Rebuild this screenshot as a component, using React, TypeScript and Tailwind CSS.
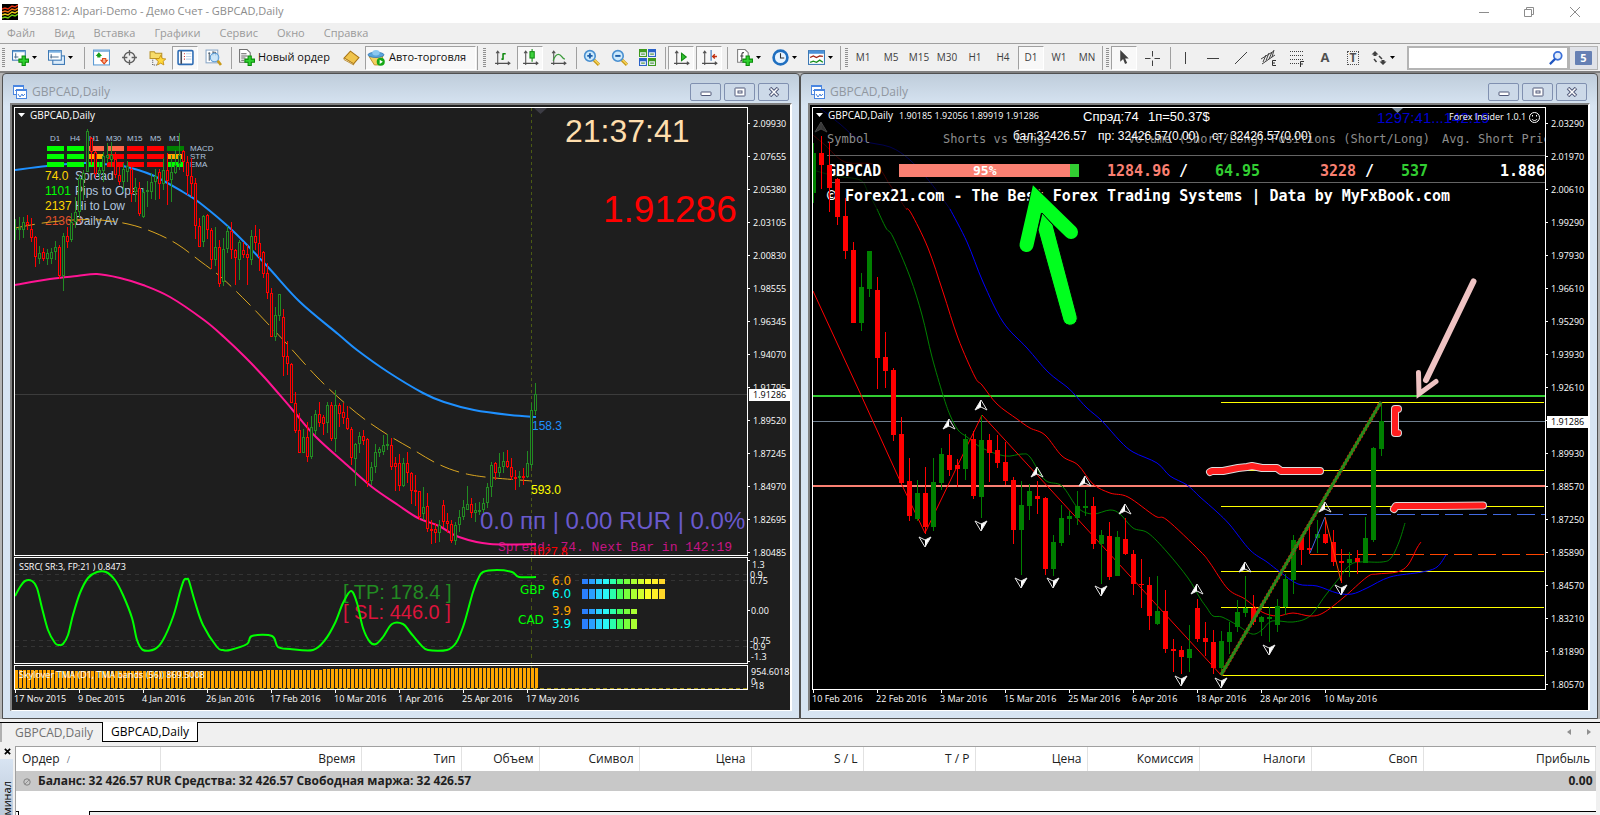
import type { ReactNode } from "react";

// high, low, body top, body bottom, 1 = up / 0 = down
type Candle = [number, number, number, number, number];

const LEFT_CANDLES: Candle[] = [
  [219, 240, 228, 230, 1], [217, 240, 228, 230, 1], [217, 238, 222, 230, 1], [215, 230, 222, 225, 0],
  [218, 242, 229, 238, 0], [236, 267, 237, 257, 0], [246, 264, 253, 259, 1], [248, 261, 252, 259, 0],
  [249, 265, 253, 259, 1], [248, 264, 252, 259, 1], [241, 260, 247, 252, 1], [245, 279, 247, 276, 0],
  [233, 291, 236, 276, 1], [227, 248, 236, 242, 0], [213, 242, 222, 240, 1], [197, 228, 212, 222, 1],
  [175, 218, 178, 212, 1], [170, 200, 173, 180, 1], [129, 172, 131, 172, 1], [137, 165, 138, 152, 0],
  [151, 178, 152, 174, 0], [162, 178, 170, 174, 1], [152, 182, 156, 171, 1], [143, 163, 155, 158, 1],
  [142, 167, 155, 160, 1], [152, 178, 159, 175, 0], [162, 185, 175, 182, 0], [163, 192, 169, 182, 1],
  [161, 182, 166, 172, 1], [167, 202, 169, 194, 0], [178, 202, 187, 192, 1], [182, 216, 188, 214, 0],
  [188, 218, 192, 217, 1], [181, 207, 190, 192, 1], [173, 199, 182, 192, 1], [169, 200, 176, 182, 1],
  [169, 199, 172, 184, 0], [158, 190, 170, 184, 1], [153, 205, 170, 181, 0], [155, 202, 172, 180, 1],
  [150, 174, 165, 173, 1], [133, 170, 155, 164, 1], [150, 172, 151, 162, 0], [156, 195, 162, 176, 0],
  [158, 197, 176, 184, 0], [178, 239, 183, 226, 0], [218, 247, 226, 247, 0], [215, 247, 216, 242, 1],
  [214, 239, 215, 230, 0], [228, 269, 230, 260, 0], [227, 266, 247, 260, 1], [240, 287, 247, 284, 0],
  [238, 286, 249, 282, 1], [226, 253, 231, 249, 1], [222, 259, 231, 250, 0], [249, 285, 250, 258, 0],
  [240, 280, 242, 260, 1], [242, 258, 250, 255, 0], [245, 285, 254, 258, 0], [230, 265, 236, 260, 1],
  [225, 250, 236, 243, 0], [229, 271, 243, 257, 0], [251, 278, 252, 274, 0], [263, 299, 273, 293, 0],
  [288, 337, 293, 337, 0], [307, 341, 315, 337, 1], [294, 321, 294, 316, 1], [309, 376, 317, 357, 0],
  [341, 375, 356, 364, 0], [363, 403, 364, 403, 0], [392, 433, 403, 431, 0], [413, 453, 430, 453, 0],
  [429, 453, 437, 453, 1], [422, 462, 437, 457, 0], [416, 459, 427, 457, 1], [410, 435, 414, 431, 1],
  [402, 427, 414, 423, 0], [415, 435, 417, 424, 0], [402, 433, 405, 423, 1], [402, 441, 405, 439, 0],
  [390, 452, 405, 439, 1], [403, 427, 405, 414, 0], [403, 424, 412, 418, 0], [406, 430, 418, 429, 0],
  [427, 465, 429, 458, 0], [443, 486, 444, 459, 1], [432, 453, 436, 444, 1], [430, 445, 436, 441, 0],
  [438, 487, 439, 482, 0], [462, 485, 467, 481, 1], [444, 473, 452, 467, 1], [447, 457, 449, 453, 1],
  [435, 455, 445, 452, 1], [434, 450, 444, 446, 1], [438, 470, 445, 467, 0], [457, 491, 463, 467, 0],
  [454, 491, 463, 486, 0], [458, 487, 463, 486, 1], [452, 483, 463, 473, 0], [472, 504, 473, 491, 0],
  [475, 506, 490, 492, 0], [491, 520, 491, 517, 0], [487, 520, 507, 514, 1], [493, 532, 506, 529, 0],
  [520, 544, 529, 530, 0], [523, 543, 529, 533, 0], [520, 542, 525, 533, 1], [500, 527, 505, 522, 0],
  [513, 533, 521, 524, 0], [520, 543, 524, 541, 0], [522, 545, 525, 541, 1], [510, 532, 517, 525, 1],
  [500, 520, 507, 517, 1], [486, 510, 504, 510, 1], [498, 518, 504, 513, 0], [503, 522, 510, 513, 1],
  [502, 515, 510, 511, 1], [498, 513, 503, 510, 1], [483, 508, 487, 503, 1], [462, 497, 465, 487, 1],
  [462, 480, 463, 473, 0], [453, 477, 467, 473, 1], [452, 473, 461, 467, 1], [450, 468, 461, 467, 0],
  [458, 480, 467, 477, 0], [470, 490, 477, 479, 0], [471, 487, 476, 478, 1], [468, 485, 476, 478, 0],
  [451, 478, 463, 477, 1], [403, 468, 410, 465, 1], [383, 415, 394, 411, 1],
];

const RIGHT_CANDLES: Candle[] = [
  [143, 203, 153, 193, 1], [136, 189, 153, 165, 0], [142, 212, 165, 188, 0], [178, 225, 179, 217, 0],
  [198, 259, 216, 251, 0], [242, 323, 250, 323, 0], [273, 331, 287, 323, 1], [251, 297, 251, 289, 1],
  [277, 389, 290, 358, 0], [332, 388, 357, 371, 0], [368, 441, 370, 435, 0], [417, 484, 434, 483, 0],
  [458, 521, 481, 516, 0], [480, 521, 493, 519, 1], [467, 534, 493, 527, 0], [458, 531, 482, 527, 1],
  [448, 490, 454, 483, 1], [434, 476, 455, 470, 0], [459, 487, 465, 469, 0], [434, 480, 439, 469, 1],
  [431, 499, 439, 496, 0], [415, 518, 440, 497, 1], [434, 482, 440, 453, 0], [435, 468, 450, 463, 0],
  [442, 485, 462, 481, 0], [477, 544, 480, 530, 0], [481, 575, 505, 530, 1], [484, 520, 491, 506, 1],
  [481, 514, 496, 499, 0], [497, 575, 498, 569, 0], [535, 576, 542, 569, 1], [505, 546, 518, 543, 1],
  [511, 535, 516, 519, 1], [491, 525, 506, 518, 1], [490, 516, 506, 508, 1], [497, 549, 506, 544, 0],
  [530, 584, 535, 544, 1], [522, 580, 536, 577, 0], [531, 576, 537, 576, 1], [518, 555, 539, 554, 0],
  [550, 595, 554, 584, 0], [559, 608, 584, 585, 0], [577, 630, 585, 616, 0], [576, 625, 611, 624, 1],
  [590, 653, 611, 649, 0], [639, 672, 649, 651, 0], [646, 674, 650, 657, 0], [625, 672, 649, 658, 1],
  [599, 642, 608, 639, 0], [622, 656, 638, 642, 0], [630, 674, 642, 668, 0], [631, 676, 641, 668, 1],
  [622, 654, 632, 642, 1], [600, 632, 612, 627, 1], [576, 617, 608, 613, 1], [595, 625, 608, 622, 0],
  [616, 636, 617, 622, 1], [607, 642, 617, 619, 1], [599, 632, 606, 625, 1], [574, 615, 579, 607, 1],
  [535, 594, 540, 580, 1], [537, 565, 538, 550, 0], [525, 554, 548, 550, 0], [520, 553, 534, 538, 1],
  [520, 544, 534, 543, 0], [530, 566, 542, 562, 0], [549, 583, 561, 563, 0], [552, 577, 559, 563, 1],
  [550, 574, 558, 562, 0], [517, 563, 538, 563, 1], [447, 542, 448, 540, 1], [402, 456, 421, 449, 1],
];

const LEFT_PRICES = [
  "2.09930", "2.07655", "2.05380", "2.03105", "2.00830", "1.98555", "1.96345",
  "1.94070", "1.91795", "1.89520", "1.87245", "1.84970", "1.82695", "1.80485",
];
const RIGHT_PRICES = [
  "2.03290", "2.01970", "2.00610", "1.99290", "1.97930", "1.96610", "1.95290", "1.93930", "1.92610",
  "", "1.89930", "1.88570", "1.87250", "1.85890", "1.84570", "1.83210", "1.81890", "1.80570",
];
const LEFT_DATES = [
  "17 Nov 2015", "9 Dec 2015", "4 Jan 2016", "26 Jan 2016", "17 Feb 2016",
  "10 Mar 2016", "1 Apr 2016", "25 Apr 2016", "17 May 2016",
];
const RIGHT_DATES = [
  "10 Feb 2016", "22 Feb 2016", "3 Mar 2016", "15 Mar 2016", "25 Mar 2016",
  "6 Apr 2016", "18 Apr 2016", "28 Apr 2016", "10 May 2016",
];

const SIGNALS = [
  { y: 146, label: "MACD", colors: ["#00ff00", "#00ff00", "#ff6347", "#ff6347", "#ff0000", "#ff0000", "#008000"] },
  { y: 154, label: "STR", colors: ["#00ff00", "#00ff00", "#ffa500", "#ff0000", "#ff0000", "#ff0000", "#ffa500"] },
  { y: 162, label: "EMA", colors: ["#00ff00", "#00ff00", "#00ff00", "#ff0000", "#ff0000", "#ff0000", "#00ff00"] },
];

const STRENGTH = [
  "#2a7fff", "#2a9fff", "#2ad4ff", "#2af7f7", "#2affaa", "#46ff5a",
  "#78ff3c", "#aaff32", "#d2ff2d", "#faff28", "#ffee28", "#ffd728",
];

const UP_FRACTALS = [[949, 424], [981, 405], [1037, 472], [1085, 481], [1125, 509], [1197, 589], [1245, 567], [1325, 507]];
const DOWN_FRACTALS = [
  [925, 542], [981, 526], [1021, 583], [1053, 583], [1101, 591], [1181, 681], [1221, 683], [1269, 650], [1341, 590],
];

const TIMEFRAMES = ["M1", "M5", "M15", "M30", "H1", "H4", "D1", "W1", "MN"];
const MENU = ["Файл", "Вид", "Вставка", "Графики", "Сервис", "Окно", "Справка"];

function barTop(i: number) {
  if (i < 10) return 670;
  if (i < 62) return 671;
  if (i < 77) return 670;
  if (i < 94) return 669;
  return 668;
}

/* ---------- toolbar ---------- */

function Sep() {
  return <div className="h-[22px] w-[5px] shrink-0 border-r border-[#a0a0a0]" />;
}

function Grip() {
  return (
    <div className="mx-px flex h-5 w-[3px] shrink-0 flex-col justify-between">
      {Array.from({ length: 10 }).map((_, i) => (
        <div key={i} className="h-px bg-[#909090]" />
      ))}
    </div>
  );
}

function ToolButton({ label, pressed, children }: { label: string; pressed?: boolean; children: ReactNode }) {
  return (
    <button
      aria-label={label}
      className={
        pressed
          ? "mx-px flex h-6 w-[26px] shrink-0 items-center justify-center border border-[#a0a0a0] border-r-white border-b-white bg-[#f8f8f8]"
          : "flex h-6 w-7 shrink-0 items-center justify-center"
      }
    >
      {children}
    </button>
  );
}

function DropButton({ label, children }: { label: string; children: ReactNode }) {
  return (
    <button aria-label={label} className="flex h-6 w-9 shrink-0 items-center gap-[3px] pl-1">
      {children}
      <svg className="h-[3px] w-[5px]" viewBox="0 0 5 3">
        <path d="M0 0h5L2.5 3z" />
      </svg>
    </button>
  );
}

function Icon({ children, className = "size-[17px]" }: { children: ReactNode; className?: string }) {
  return (
    <svg viewBox="0 0 16 16" className={`shrink-0 overflow-visible ${className}`} fill="none">
      {children}
    </svg>
  );
}

function Plus() {
  return <path d="M9.5 6.500h3v3h3v3h-3v3h-3v-3h-3v-3h3z" fill="#2fd12f" stroke="#0a8a0a" />;
}

function Axes() {
  return <path d="M3.500 2v13M1 13.500h14M2 4l1.500-2L5 4M13 12l2 1.500-2 1.500" stroke="#505050" />;
}

function Magnifier({ plus }: { plus?: boolean }) {
  return (
    <>
      <path d="M10 10l5 5" stroke="#c99a1a" strokeWidth="3" />
      <path d="M10.500 10l4.500 4.500" stroke="#ffe066" />
      <circle cx="6.500" cy="6.500" r="5" fill="#cdeafc" stroke="#4a90d0" strokeWidth="1.500" />
      <path d={plus ? "M4 6.500h5M6.500 4v5" : "M4 6.500h5"} stroke="#1f5fa8" strokeWidth="1.800" />
    </>
  );
}

function Toolbar() {
  return (
    <div className="flex h-[27px] items-center overflow-hidden bg-[#f0f0f0] pl-px">
      <Grip />
      <div className="w-0.5 shrink-0" />
      <DropButton label="Новый график">
        <Icon>
          <rect x="0.500" y="1.500" width="12" height="9" fill="#fff" stroke="#3c78b4" />
          <path d="M1 2.500h11" stroke="#5b9bd5" />
          <path d="M3.500 4v5M2 7.500h4" stroke="#507090" />
          <Plus />
        </Icon>
      </DropButton>
      <DropButton label="Профили">
        <Icon>
          <rect x="4.500" y="6.500" width="11" height="8" fill="#dcecfa" stroke="#3c78b4" />
          <rect x="0.500" y="1.500" width="12" height="9" fill="#fff" stroke="#3c78b4" />
          <path d="M1 2.500h11" stroke="#7ab0e0" strokeWidth="2" />
          <path d="M3 5v4M2 7.500h8" stroke="#507090" />
        </Icon>
      </DropButton>
      <Sep />
      <div className="w-0.5 shrink-0" />
      <ToolButton label="Обзор рынка">
        <Icon>
          <rect x="0.500" y="1" width="15" height="14" fill="#fff" stroke="#5b9bd5" />
          <path d="M1 2h14" stroke="#5b9bd5" />
          <path d="M5.500 3l3 3.500H7V8H4V6.500H2.500z" fill="#18a018" />
          <path d="M10.500 14l-3-3.500H9V9h3v1.500h1.500z" fill="#f8b090" stroke="#e04818" />
        </Icon>
      </ToolButton>
      <ToolButton label="Окно данных">
        <Icon>
          <circle cx="8" cy="8" r="5" stroke="#606060" strokeWidth="1.300" />
          <path d="M8 1v5M8 10v5M1 8h5M10 8h5" stroke="#606060" strokeWidth="1.200" />
        </Icon>
      </ToolButton>
      <ToolButton label="Навигатор">
        <Icon>
          <path d="M1 9V2.500h4l1 1.500h6v5z" fill="#f7dc6a" stroke="#b8922a" />
          <path d="M3.500 10v5h4" stroke="#505050" strokeDasharray="1 1" />
          <path d="M11 6l1.500 3 3.300.4-2.500 2.200.7 3.400-3-1.700L8 15l.7-3.400-2.500-2.200 3.300-.4z" fill="#ffd83a" stroke="#c08a10" strokeWidth="0.800" />
        </Icon>
      </ToolButton>
      <ToolButton label="Терминал" pressed>
        <Icon>
          <rect x="1" y="1.500" width="14" height="13" rx="1" fill="#fff" stroke="#2f6db5" strokeWidth="1.500" />
          <path d="M4 2v12" stroke="#404858" strokeWidth="1.500" />
          <path d="M6.500 4.500h1M6.500 7h1M6.500 9.500h1" stroke="#d03030" />
          <path d="M8.500 4.500h5M8.500 7h5M8.500 9.500h5" stroke="#c4d6ec" />
        </Icon>
      </ToolButton>
      <ToolButton label="Тестер стратегий">
        <Icon>
          <rect x="1" y="1" width="11" height="12" fill="#fff" stroke="#8aa8c8" />
          <path d="M4 3v8M3 4h2M7.500 2v4M10 3v3M7 3h3" stroke="#506070" />
          <circle cx="9" cy="8" r="4" fill="#bfe0f8" fillOpacity="0.800" stroke="#5b9bd5" />
          <path d="M12 11l3 4" stroke="#c99a1a" strokeWidth="2.500" />
        </Icon>
      </ToolButton>
      <Sep />
      <button className="flex h-6 shrink-0 items-center gap-[3px] pr-[5px] pl-[6px]">
        <Icon>
          <path d="M1.500 0.500h7l3 3v9h-10z" fill="#fff" stroke="#707070" />
          <path d="M3 4.500h5M3 6.500h6M3 8.500h4M3 10.500h3" stroke="#606060" />
          <Plus />
        </Icon>
        <span className="w-[74px] text-left text-[11px] whitespace-nowrap text-[#101010]">Новый ордер</span>
      </button>
      <ToolButton label="MetaEditor">
        <Icon>
          <path d="M1 8.500l6-6.500 8 6-5 6z" fill="#f0c44c" stroke="#a87414" />
          <path d="M1 8.500l9 5.500v1L1 10z" fill="#fff4c8" stroke="#a87414" strokeWidth="0.700" />
        </Icon>
      </ToolButton>
      <button className="flex h-6 w-[111px] shrink-0 items-center gap-1 border border-[#a0a0a0] border-r-white border-b-white bg-[#f8f8f8] pl-0.5">
        <Icon>
          <path d="M1 7l5 8h5l3-8z" fill="#f4d060" stroke="#b48a20" strokeWidth="0.800" />
          <ellipse cx="7.500" cy="5.500" rx="7.500" ry="2.500" fill="#5aa5dc" stroke="#2a70b0" strokeWidth="0.700" />
          <ellipse cx="7.500" cy="3.500" rx="3.500" ry="2.500" fill="#8cc8f0" />
          <circle cx="12" cy="12" r="3.800" fill="#16a816" />
          <path d="M11 10l3 2-3 2z" fill="#fff" />
        </Icon>
        <span className="text-[11px] whitespace-nowrap text-[#101010]">Авто-торговля</span>
      </button>
      <div className="h-6 w-0.5 shrink-0 border-r border-[#a0a0a0]" />
      <div className="w-1 shrink-0" />
      <Grip />
      <div className="w-px shrink-0" />
      <ToolButton label="Бары">
        <Icon><Axes /><path d="M8.500 10V4M8.500 9.500H7M8.500 4.500H11" stroke="#128a12" strokeWidth="1.500" /></Icon>
      </ToolButton>
      <ToolButton label="Свечи" pressed>
        <Icon><Axes /><path d="M9.500 0v12" stroke="#128a12" /><rect x="7.500" y="2.500" width="4" height="6" fill="#3cd23c" stroke="#128a12" /></Icon>
      </ToolButton>
      <ToolButton label="Линия">
        <Icon><Axes /><path d="M3 11c1-3 3-6 5-6 3 0 3 4 6 4.500" stroke="#3a9a3a" strokeWidth="1.200" /></Icon>
      </ToolButton>
      <Sep />
      <ToolButton label="Увеличить"><Icon><Magnifier plus /></Icon></ToolButton>
      <ToolButton label="Уменьшить"><Icon><Magnifier /></Icon></ToolButton>
      <ToolButton label="Окна мозаикой">
        <Icon>
          <path d="M0 0h7.500v7.500H0zM8.500 8.500H16V16H8.500z" fill="#3f9a1e" />
          <path d="M8.500 0H16v7.500H8.500zM0 8.500h7.500V16H0z" fill="#2a62c8" />
          <path d="M1 3h5.500v3.500H1zM9.500 3H15v3.500H9.500zM1 11.500h5.500V15H1zM9.500 11.500H15V15H9.500z" fill="#e8f0f8" />
          <path d="M2 4.800h3.500M10.500 4.800H14M2 13.300h3.500M10.500 13.300H14" stroke="#5a9a4a" />
        </Icon>
      </ToolButton>
      <Sep />
      <div className="w-px shrink-0" />
      <ToolButton label="Автопрокрутка" pressed>
        <Icon><Axes /><path d="M8 4l4.500 3.500L8 11z" fill="#2cc02c" stroke="#128a12" /></Icon>
      </ToolButton>
      <ToolButton label="Сдвиг графика" pressed>
        <Icon><Axes /><path d="M9.500 1v10" stroke="#2f6db5" /><path d="M15 7h-4M13 5l-2 2 2 2" stroke="#c03010" strokeWidth="1.300" /></Icon>
      </ToolButton>
      <Sep />
      <div className="w-1 shrink-0" />
      <DropButton label="Индикаторы">
        <Icon>
          <path d="M1.500 0.500h7l3 3v9h-10z" fill="#fff" stroke="#808080" />
          <path d="M7.500 3.500c-2-.5-2 1-2 2.500v4c0 1-.5 1.500-1.500 1M4 6.500h3" stroke="#404040" />
          <Plus />
        </Icon>
      </DropButton>
      <DropButton label="Периоды">
        <Icon>
          <circle cx="8" cy="8" r="6.500" fill="#e8f4ff" stroke="#1f6fc0" strokeWidth="2.500" />
          <path d="M8 4v4.500h3.500" stroke="#303030" />
        </Icon>
      </DropButton>
      <DropButton label="Шаблоны">
        <Icon>
          <rect x="0.500" y="1.500" width="15" height="13" fill="#fff" stroke="#3c78b4" />
          <path d="M1 3h14" stroke="#4a90d8" strokeWidth="3" />
          <path d="M2 8l3-1.500 3 1.500 3-1.500 3 .5" stroke="#a02010" strokeWidth="1.300" />
          <path d="M2 12.500l3-1 3 1 3-2 3 2" stroke="#18901c" strokeWidth="1.300" />
        </Icon>
      </DropButton>
      <div className="h-6 w-px shrink-0 bg-[#a0a0a0]" />
      <div className="w-[3px] shrink-0" />
      <Grip />
      {TIMEFRAMES.map((tf) => (
        <ToolButton key={tf} label={tf} pressed={tf === "D1"}>
          <span className="text-[10px] text-[#404040]">{tf}</span>
        </ToolButton>
      ))}
      <div className="h-6 w-0.5 shrink-0 border-r border-[#a0a0a0]" />
      <div className="w-0.5 shrink-0" />
      <Grip />
      <ToolButton label="Курсор" pressed>
        <Icon><path d="M4 1v11l2.700-2.500L8.500 14l2-.8-1.900-4.200H12z" fill="#404040" /></Icon>
      </ToolButton>
      <ToolButton label="Перекрестие">
        <Icon className="size-4"><path d="M8.500 1v5.500M8.500 10.500V16M1 8.500h5.500M10.500 8.500H16" stroke="#404040" /></Icon>
      </ToolButton>
      <Sep />
      <ToolButton label="Вертикальная линия"><Icon className="size-4"><path d="M8.500 2v12" stroke="#404040" /></Icon></ToolButton>
      <ToolButton label="Горизонтальная линия"><Icon className="size-4"><path d="M2 8.500h12" stroke="#404040" /></Icon></ToolButton>
      <ToolButton label="Трендовая линия"><Icon className="size-4"><path d="M2 14L14 2" stroke="#404040" /></Icon></ToolButton>
      <ToolButton label="Канал">
        <Icon className="size-4">
          <path d="M0 9L13 1M1 14L14 5M2 12l3-7M5 10.500L8 3M8 9l3-7M11 7l2-7" stroke="#404040" />
          <path d="M15 10.500h-3.500v5H15M11.500 13H14" stroke="#303030" />
        </Icon>
      </ToolButton>
      <ToolButton label="Фибоначчи">
        <Icon className="size-4">
          <path d="M1 1.500h14M1 5.500h14M1 9.500h14M1 13.500h9" stroke="#404040" strokeDasharray="1 1" />
          <path d="M15 11.500h-3.500V17M11.500 14H14" stroke="#303030" />
        </Icon>
      </ToolButton>
      <ToolButton label="Текст"><span className="text-[13px] font-bold text-[#505050]">A</span></ToolButton>
      <ToolButton label="Метка">
        <span className="flex h-[14px] w-3 items-center justify-center border border-dotted border-[#505050] text-[12px] font-bold text-[#505050]">
          T
        </span>
      </ToolButton>
      <DropButton label="Стрелки">
        <Icon className="size-4">
          <path d="M4 1l3.500 3.500H5.500v1.500h-3V4.500H.5zM12 15l-3.500-3.500h2V10h3v1.500h2z" fill="#404040" />
          <path d="M3 9l2.500 3M8 6l3 3" stroke="#404040" strokeWidth="1.500" />
        </Icon>
      </DropButton>
      <div className="ml-1 flex h-6 min-w-0 flex-1 items-center border-2 border-[#b4b4b4] bg-white">
        <input type="text" aria-label="Поиск" className="min-w-0 flex-1 bg-transparent px-1 text-[11px] outline-none" />
        <Icon className="mr-1 size-[14px]">
          <circle cx="10" cy="5.500" r="4.500" stroke="#3a6fd8" strokeWidth="2" fill="#e4eefc" />
          <path d="M7 9l-6 6" stroke="#1f55c0" strokeWidth="2.500" />
        </Icon>
      </div>
      <button className="mr-0.5 flex h-6 w-[29px] shrink-0 items-center justify-center border border-[#b4b4b4] bg-[#e0e2e8]">
        <span className="rounded-[1px] bg-[#6680b4] px-[5px] text-[11px] leading-[14px] font-bold text-white">5</span>
      </button>
    </div>
  );
}

/* ---------- chart pieces ---------- */

function Candles({ data, x0, step, hollow }: { data: Candle[]; x0: number; step: number; hollow?: boolean }) {
  return (
    <g shapeRendering="crispEdges">
      {data.map(([h, l, t, b, up], i) => {
        const x = x0 + i * step;
        const color = hollow ? (up ? "#228b22" : "#ff0000") : up ? "#008000" : "#ff0000";
        return (
          <g key={i}>
            <rect x={x} y={h} width={1} height={l - h} fill={color} />
            {hollow ? (
              <rect x={x - 0.5} y={t + 0.5} width={2} height={Math.max(1, b - t - 1)} fill="#1e1e1e" stroke={color} />
            ) : (
              <rect x={x - 2} y={t} width={5} height={Math.max(1, b - t)} fill={color} />
            )}
          </g>
        );
      })}
    </g>
  );
}

type LineProps = { points: string; color: string; width?: number; dash?: string };

function Line({ points, color, width = 1, dash }: LineProps) {
  return <polyline points={points} fill="none" stroke={color} strokeWidth={width} strokeDasharray={dash} />;
}

// Same as Line, but runs a Catmull-Rom spline through the points
function Curve({ points, color, width = 1, dash }: LineProps) {
  const p = points.split(" ").map((s) => s.split(",").map(Number));
  let d = `M${p[0][0]} ${p[0][1]}`;
  for (let i = 0; i < p.length - 1; i++) {
    const a = p[i - 1] ?? p[i];
    const b = p[i];
    const c = p[i + 1];
    const e = p[i + 2] ?? c;
    d += `C${b[0] + (c[0] - a[0]) / 6} ${b[1] + (c[1] - a[1]) / 6} ${c[0] - (e[0] - b[0]) / 6} ${c[1] - (e[1] - b[1]) / 6} ${c[0]} ${c[1]}`;
  }
  return <path d={d} fill="none" stroke={color} strokeWidth={width} strokeDasharray={dash} />;
}

function PriceScale({ prices, current }: { prices: string[]; current: ReactNode }) {
  return (
    <div className="relative h-0 w-[42px] shrink-0">
      {prices.map((p, i) => (
        <div key={i} className="flex h-[33px] items-center gap-[3px] text-[9px] text-white">
          <span className="h-px w-0.5 bg-white" />
          {p}
        </div>
      ))}
      {current}
    </div>
  );
}

function TimeScale({ dates }: { dates: string[] }) {
  return (
    <div className="flex h-5 overflow-hidden pl-px text-[9px] leading-[14px] whitespace-nowrap text-white">
      {dates.map((d) => (
        <div key={d} className="relative w-16 shrink-0">
          <span className="absolute top-0 left-0 h-[3px] w-px bg-white" />
          <span className="-ml-px block pt-0.5">{d}</span>
        </div>
      ))}
    </div>
  );
}

function WindowButton({ label, children }: { label: string; children: ReactNode }) {
  return (
    <button
      aria-label={label}
      className="flex h-[18px] w-[31px] items-center justify-center rounded-[2px] border border-[#8090b0] bg-[#ccd9e8]"
    >
      <svg viewBox="0 0 12 10" className="h-[10px] w-3" fill="none">
        {children}
      </svg>
    </button>
  );
}

function ChartWindow({ title, dark, children }: { title: string; dark: string; children: ReactNode }) {
  return (
    <section className="min-w-0 flex-1 rounded-t-[4px] border border-[#505050] bg-gradient-to-b from-[#bfcddb] from-0% to-[#d7e4f2] to-5% px-[7px] pb-[7px]">
      <header className="flex h-[29px] items-center pt-1.5">
        <svg viewBox="0 0 14 14" className="ml-[3px] size-[14px]" fill="none">
          <rect x="0.500" y="0.500" width="10" height="9" fill="#fff" stroke="#4a86e0" />
          <path d="M1 1.500h9" stroke="#4a86e0" />
          <path d="M2 6l2-2 2 3 2-3" stroke="#4a86e0" />
          <rect x="3.500" y="4.500" width="10" height="9" fill="#fff" stroke="#4a86e0" />
          <path d="M4 5.500h9M5 9l2 3 2-3 1 2 2-2" stroke="#4a86e0" />
        </svg>
        <h2 className="ml-[5px] flex-1 text-[12px] text-[#9097a0]">{title}</h2>
        <div className="mr-[3px] flex gap-[3px]">
          <WindowButton label="Свернуть">
            <rect x="1" y="5" width="10" height="3.500" rx="0.500" fill="#fff" stroke="#505878" />
          </WindowButton>
          <WindowButton label="Развернуть">
            <rect x="1" y="1" width="10" height="8" rx="0.500" fill="#fff" stroke="#505878" />
            <rect x="4" y="4" width="4" height="2" fill="#fff" stroke="#505878" />
          </WindowButton>
          <WindowButton label="Закрыть">
            <path d="M2 1l8 8M10 1L2 9" stroke="#505878" strokeWidth="3.500" />
            <path d="M2.500 1.500l7 7M9.500 1.500l-7 7" stroke="#fff" strokeWidth="1.500" />
          </WindowButton>
        </div>
      </header>
      <div className={`border-t-2 border-r-2 border-b border-l-2 border-[#808080] border-r-white border-b-white pt-0.5 pl-0.5 ${dark}`}>
        {children}
      </div>
    </section>
  );
}

function LeftChart() {
  return (
    <ChartWindow title="GBPCAD,Daily" dark="bg-[#1e1e1e]">
      <div className="flex">
        <div className="min-w-0 flex-1 border border-white">
          <svg className="block h-[447px] w-full overflow-hidden">
            <g transform="translate(-15,-108)">
              <g shapeRendering="crispEdges">
                <line x1="531.500" x2="531.500" y1="108" y2="556" stroke="#4b5a14" strokeDasharray="3 3" />
                <line x1="15" x2="2400" y1="394.500" y2="394.500" stroke="#3c3c3c" />
              </g>
              <path d="M534 108h13l-6.500 6z" fill="#3c3c44" />
              <path d="M18 113h7l-3.500 4z" fill="#fff" />
              <text x="30" y="119" className="fill-white text-[10px]">GBPCAD,Daily</text>

              <Curve color="#1e90ff" width={2} points="15,170 47,166 83,163 103,164 123,166 152,175 183,192 200,203 233,231 267,266 300,302 338,334 357,350 388,372 423,393 444,402 474,410 510,415 536,417" />
              <g className="font-['Liberation_Sans'] text-[8px]" fill="#b0c4de">
                {["D1", "H4", "H1", "M30", "M15", "M5", "M1"].map((t, i) => (
                  <text key={t} x={[50, 70, 89, 106, 127, 150, 169][i]} y="141">{t}</text>
                ))}
                {SIGNALS.map((row) => (
                  <text key={row.label} x="190" y={row.y + 5}>{row.label}</text>
                ))}
              </g>
              {SIGNALS.map((row) =>
                row.colors.map((c, i) => <rect key={row.label + i} x={47 + i * 20} y={row.y} width="17" height="5" fill={c} />)
              )}
              <g className="font-['Liberation_Sans'] text-[12px]">
                <text x="45" y="180" fill="#ffd700">74.0</text>
                <text x="75" y="180" fill="#b0c4de">Spread</text>
                <text x="45" y="195" fill="#00ff00">1101</text>
                <text x="75" y="195" fill="#b0c4de">Pips to Open</text>
                <text x="45" y="210" fill="#ffd700">2137</text>
                <text x="75" y="210" fill="#b0c4de">Hi to Low</text>
                <text x="45" y="225" fill="#e2502a">2136.3</text>
                <text x="75" y="225" fill="#b0c4de">Daily Av</text>
              </g>
              <text x="565" y="142" className="font-['Liberation_Sans'] text-[32px]" fill="#ffdead">21:37:41</text>
              <text x="603" y="222" className="font-['Liberation_Sans'] text-[37px]" fill="#ff0000">1.91286</text>
              <text x="480" y="529" className="font-['Liberation_Sans'] text-[24px]" fill="#6a5acd">0.0 пп | 0.00 RUR | 0.0%</text>
              <text x="498" y="551" className="font-['Liberation_Mono'] text-[13px]" fill="#c71585">Spread: 74. Next Bar in 142:19</text>
              <text x="532" y="430" className="font-['Liberation_Sans'] text-[12px]" fill="#1e90ff">158.3</text>
              <text x="531" y="494" className="font-['Liberation_Sans'] text-[12px]" fill="#ffff00">593.0</text>
              <text x="531" y="556" className="font-['Liberation_Sans'] text-[12px]" fill="#ff0000">1027.8</text>

              <Curve color="#daa520" dash="20 7" points="15,228 43,223 73,220 100,220 128,224 153,232 177,244 200,261 222,278 248,303 270,326 286,343 316,376 339,398 363,418 388,435 412,449 436,463 459,472 485,477 532,481" />
              <Curve color="#ff1493" width={2} points="15,285 50,279 77,276 97,274 120,278 143,285 170,297 204,320 224,337 245,357 265,378 291,408 316,437 347,465 372,487 398,505 418,518 439,526 459,537 490,544 536,544" />
              <Candles data={LEFT_CANDLES} x0={15} step={4} hollow />
            </g>
          </svg>
        </div>
        <PriceScale
          prices={LEFT_PRICES}
          current={
            <div className="absolute top-[282px] right-0 left-px h-3 bg-white pl-1 text-[9px] leading-3 text-black">1.91286</div>
          }
        />
      </div>

      <div className="mt-px flex">
        <div className="min-w-0 flex-1 border border-white">
          <svg className="block h-[105px] w-full overflow-hidden">
            <g transform="translate(-15,-558)">
              <g stroke="#343434" strokeDasharray="4 4" shapeRendering="crispEdges">
                {[574.5, 580.5, 640.5, 646.5].map((y) => (
                  <line key={y} x1="15" x2="2400" y1={y} y2={y} />
                ))}
                <line x1="531.500" x2="531.500" y1="558" y2="664" stroke="#4b5a14" />
              </g>
              <text x="19" y="570" className="fill-white text-[9px]">SSRC( SR:3,  FP:21 ) 0.8473</text>
              <g className="font-['Liberation_Sans'] text-[20px]">
                <text x="343" y="599" fill="#228b22">[ TP: 178.4 ]</text>
                <text x="343" y="619" fill="#dc143c">[ SL: 446.0 ]</text>
              </g>
              <Curve color="#00ff00" width={2} points="15,596 20,587 25,581 32,581 37,588 42,608 48,630 55,643 59,645 63,644 68,635 73,615 80,593 88,578 97,572 106,572 115,580 123,595 132,618 137,640 143,650 155,649 163,640 173,617 180,592 184,580 187,579 189,581 195,602 203,625 217,647 223,650 230,650 247,644 252,636 272,636 278,647 290,649 313,650 325,640 335,623 343,603 351,591 357,603 363,628 370,642 376,644 383,637 392,624 403,624 410,632 420,644 428,650 447,650 456,643 463,627 468,610 473,592 478,579 483,572 497,570 512,572 519,577 536,577" />
              <g className="font-['DejaVu_Sans'] text-[12px]">
                <text x="520" y="594" fill="#00ff00">GBP</text>
                <text x="518" y="624" fill="#00ff00">CAD</text>
                <text x="552" y="585" fill="#ffa500">6.0</text>
                <text x="552" y="598" fill="#00ffff">6.0</text>
                <text x="552" y="615" fill="#ffa500">3.9</text>
                <text x="552" y="628" fill="#00ffff">3.9</text>
              </g>
              {STRENGTH.map((c, i) => (
                <g key={c} fill={c}>
                  <rect x={582 + i * 7} y="579" width="6" height="5" />
                  <rect x={582 + i * 7} y="589" width="6" height="10" />
                  {i < 8 && <rect x={582 + i * 7} y="609" width="6" height="5" />}
                  {i < 8 && <rect x={582 + i * 7} y="619" width="6" height="10" />}
                </g>
              ))}
            </g>
          </svg>
        </div>
        <svg className="block h-[107px] w-[42px] shrink-0 overflow-visible">
          <g className="fill-white text-[9px]">
            <text x="4" y="11">1.3</text>
            <text x="2" y="21">0.9</text>
            <text x="2" y="27">0.75</text>
            <text x="3" y="57">0.00</text>
            <text x="2" y="87">-0.75</text>
            <text x="2" y="93">-0.9</text>
            <text x="3" y="103">-1.3</text>
          </g>
          <path d="M0 3.500h2M0 53.500h2M0 104.500h2" stroke="#fff" />
        </svg>
      </div>

      <div className="mt-px flex">
        <div className="min-w-0 flex-1 border border-white">
          <svg className="block h-[23px] w-full overflow-hidden">
            <g transform="translate(-15,-666)" shapeRendering="crispEdges">
              <line x1="531.500" x2="531.500" y1="666" y2="689" stroke="#4b5a14" strokeDasharray="3 3" />
              {Array.from({ length: 131 }).map((_, i) => (
                <rect key={i} x={15 + i * 4} y={barTop(i)} width="3" height={688 - barTop(i)} fill="#ffa500" />
              ))}
              <line x1="15" x2="2400" y1="688.500" y2="688.500" stroke="#9a8a10" strokeDasharray="4 3" />
              <text x="19" y="678" className="fill-white text-[9px]">Skylover TMA (D1, TMA bands (56)) 869.5008</text>
            </g>
          </svg>
        </div>
        <svg className="block h-[25px] w-[42px] shrink-0 overflow-visible">
          <g className="fill-white text-[9px]">
            <text x="3" y="10">954.6018</text>
            <text x="3" y="20">0</text>
            <text x="3" y="24">-18</text>
          </g>
        </svg>
      </div>
      <TimeScale dates={LEFT_DATES} />
    </ChartWindow>
  );
}

function RightChart() {
  return (
    <ChartWindow title="GBPCAD,Daily" dark="bg-black">
      <div className="flex">
        <div className="min-w-0 flex-1 border border-white">
          <svg className="block h-[581px] w-full overflow-hidden">
            <defs>
              <g id="fractal">
                <path d="M0-5L-6 5L0 2z" fill="#fff" />
                <path d="M0-5L-6 5L0 2L6 5z" fill="none" stroke="#e8e8e8" />
              </g>
            </defs>
            <g transform="translate(-813,-108)">
              <g shapeRendering="crispEdges">
                <line x1="813" x2="2400" y1="396" y2="396" stroke="#32cd32" strokeWidth="2" />
                <line x1="813" x2="2400" y1="421.500" y2="421.500" stroke="#708090" />
                <line x1="813" x2="2400" y1="486" y2="486" stroke="#fa8072" strokeWidth="2" />
                {[402.5, 470.5, 506.5, 571.5, 607.5, 675.5].map((y) => (
                  <line key={y} x1="1221" x2="1544" y1={y} y2={y} stroke="#ffff00" />
                ))}
                <line x1="1325" x2="2400" y1="514.500" y2="514.500" stroke="#4169e1" strokeDasharray="18 6" />
                <line x1="1310" x2="2400" y1="554.500" y2="554.500" stroke="#ff4500" strokeDasharray="18 6" />
              </g>

              <Curve color="#002c00" points="813,170 835,176 860,180 868,192 877,209" />
              <Curve color="#400000" points="813,135 825,145 845,162 875,165 890,185 906,209" />
              <Curve color="#000050" points="820,108 840,124 860,140 890,147 910,160 930,182 950,209" />
              <path d="M821 122l-6 10 6-3zM821 122l6 10-6-3" fill="#333" stroke="#444" />

              <path d="M816 113h7l-3.500 4z" fill="#fff" />
              <path d="M1392 108h11l-5.500 5z" fill="#708090" />
              <text x="828" y="119" className="fill-white text-[10px]">GBPCAD,Daily</text>
              <text x="899" y="119" className="fill-white text-[9px]">1.90185 1.92056 1.89919 1.91286</text>
              <g className="font-['DejaVu_Sans_Mono'] text-[12px]" fill="#8c8c8c">
                <text x="827" y="143">Symbol</text>
                <text x="943" y="143">Shorts vs Longs</text>
                <text x="1128" y="143">Volume (Short/Long)</text>
                <text x="1271" y="143">Positions (Short/Long)</text>
                <text x="1442" y="143">Avg. Short Price</text>
              </g>
              <text x="1377" y="123" className="font-['Liberation_Sans'] text-[15px]" fill="#0000cd">1297:41...142:19</text>
              <g className="font-['Liberation_Sans']" fill="#fff">
                <text x="1083" y="121" className="text-[13px]">Спрэд:74</text>
                <text x="1148" y="121" className="text-[13px]">1п=50.37$</text>
                <text x="1013" y="140" className="text-[12px]">бал:32426.57</text>
                <text x="1098" y="140" className="text-[12px]">пр: 32426.57(0.00)</text>
                <text x="1212" y="140" className="text-[12px]">ст: 32426.57(0.00)</text>
              </g>
              <text x="1449" y="120" className="fill-white text-[9px]">Forex Insider 1.0.1</text>
              <g fill="none" stroke="#fff">
                <circle cx="1534.500" cy="117.500" r="5" />
                <path d="M1532 119c1 2 4 2 5 0M1532.500 115v1.500M1536.500 115v1.500" />
              </g>
              <g stroke="#646464" shapeRendering="crispEdges">
                <line x1="827" x2="2400" y1="155.500" y2="155.500" />
                <line x1="827" x2="2400" y1="182.500" y2="182.500" />
              </g>
              <rect x="899" y="164" width="171" height="13" fill="#fa8072" />
              <rect x="1070" y="164" width="9" height="13" fill="#32cd32" />
              <text x="973" y="175" className="font-['DejaVu_Sans_Mono'] text-[13px] font-bold" fill="#fff">95%</text>
              <g className="font-['DejaVu_Sans_Mono'] text-[15px] font-bold" fill="#fff">
                <text x="827" y="176">GBPCAD</text>
                <text x="1107" y="176" fill="#fa8072">1284.96</text>
                <text x="1179" y="176">/</text>
                <text x="1215" y="176" fill="#32cd32">64.95</text>
                <text x="1320" y="176" fill="#fa8072">3228</text>
                <text x="1365" y="176">/</text>
                <text x="1401" y="176" fill="#32cd32">537</text>
                <text x="1500" y="176">1.88612</text>
                <text x="827" y="201">© Forex21.com - The Best Forex Trading Systems | Data by MyFxBook.com</text>
              </g>

              <Curve color="#008000" points="877,209 886,228 893,237 910,277 922,315 932,357 943,395 950,415 958,430 967,437 982,448 1005,456 1022,454 1030,457 1045,480 1062,486 1078,508 1093,514 1110,510 1120,514 1133,528 1148,533 1167,552 1188,578 1200,598 1207,608 1213,616 1222,617 1237,625 1252,634 1262,630 1272,621 1293,622 1310,616 1325,596 1340,577 1350,565 1360,562 1382,562 1391,558 1399,542 1405,523" />
              <Curve color="#ff0000" points="906,209 911,213 928,248 943,292 958,338 975,377 982,385 997,404 1017,419 1030,428 1045,435 1062,456 1078,465 1093,484 1110,493 1128,497 1155,516 1167,520 1200,551 1210,563 1228,589 1245,599 1262,612 1277,616 1293,613 1310,616 1323,613 1343,598 1367,577 1377,574 1397,572 1408,565 1417,548 1421,542" />
              <Curve color="#0000ff" points="950,209 967,242 983,282 1003,322 1027,348 1048,372 1067,387 1075,395 1087,408 1102,421 1120,441 1133,452 1157,463 1170,476 1187,485 1200,497 1217,512 1230,525 1250,550 1267,562 1280,572 1298,584 1317,586 1337,593 1352,594 1367,588 1390,577 1422,572 1437,567 1446,555" />
              <Line color="#ff0000" points="813,291 861,395 901,483 925,533 982,415 1221,675 1381,402" />
              <Candles data={RIGHT_CANDLES} x0={813} step={8} />
              <Line color="#ff0000" width={4} dash="2 2" points="1221,675 1381,402" />
              <Line color="#2a8a1a" width={3} points="1221,675 1381,402" />
              <Line color="#4169e1" points="1310,553 1325,517" />
              <Line color="#ff4500" points="1325,517 1341,581" />
              {UP_FRACTALS.map(([x, y]) => (
                <use key={x} href="#fractal" transform={`translate(${x},${y})`} />
              ))}
              {DOWN_FRACTALS.map(([x, y]) => (
                <use key={x} href="#fractal" transform={`translate(${x},${y}) rotate(180)`} />
              ))}

              {/* hand-drawn marks */}
              <g fill="none" strokeLinecap="round" strokeMiterlimit="6">
                <path d="M1026.500 245L1037 199L1071 232" stroke="#000" strokeWidth="16" />
                <path d="M1026.500 245L1037 199L1071 232" stroke="#00ff1e" strokeWidth="14" />
              </g>
              <path d="M1042 213l11 12 24 91a7 7 0 0 1-14 4l-25-90z" fill="#00ff1e" stroke="#000" />
              <g fill="none" stroke="#efc3c3" strokeLinecap="round">
                <path d="M1473.500 281.500L1426 380" strokeWidth="6" />
                <path d="M1418.500 372.500L1419 394L1436 381.500" strokeWidth="5" />
              </g>
              {[
                "M1210 472L1212 471H1223L1238 468L1247 467L1252 466L1262 468H1277L1281 471H1320",
                "M1394 509L1396 506H1439L1483 505.500",
                "M1398 409H1395V433H1398",
              ].map((d) => (
                <g key={d} fill="none" strokeLinecap="round" strokeLinejoin="round">
                  <path d={d} stroke="#dcdcdc" strokeWidth="8" />
                  <path d={d} stroke="#ff1e1e" strokeWidth="6" />
                </g>
              ))}
            </g>
          </svg>
        </div>
        <PriceScale
          prices={RIGHT_PRICES}
          current={
            <div className="absolute top-[309px] right-0 left-px h-3 bg-white pl-1 text-[9px] leading-3 text-black">1.91286</div>
          }
        />
      </div>
      <TimeScale dates={RIGHT_DATES} />
    </ChartWindow>
  );
}

/* ---------- terminal ---------- */

function Terminal() {
  const rest = ["S / L", "T / P", "Цена", "Комиссия", "Налоги", "Своп"];
  return (
    <div className="flex flex-1 overflow-hidden bg-[#f0f0f0]">
      <div className="flex w-[15px] shrink-0 flex-col items-center">
        <button aria-label="Закрыть" className="flex h-[17px] items-center pt-0.5">
          <svg viewBox="0 0 8 8" className="size-[7px]"><path d="M1 1l6 6M7 1L1 7" stroke="#000" strokeWidth="2" /></svg>
        </button>
        <div className="mr-0.5 h-[60px] w-[13px] overflow-hidden bg-gradient-to-b from-[#d8e4f2] to-[#bccada] pt-[22px]">
          <span className="rotate-180 text-[11px] leading-[13px] text-black [writing-mode:vertical-rl]">Терминал</span>
        </div>
      </div>
      <div className="mt-[3px] mr-1 flex min-w-0 flex-1 flex-col border-t border-l border-[#a0a0a0] bg-white">
        <table className="w-full table-fixed border-collapse text-[12px] text-[#202020]">
          <colgroup>
            <col className="w-[144px]" />
            <col className="w-[201px]" />
            <col className="w-[100px]" />
            <col className="w-[78px]" />
            <col className="w-[100px]" />
            {["p", ...rest].map((c) => <col key={c} className="w-[112px]" />)}
            <col />
          </colgroup>
          <thead>
            <tr className="h-6 text-right [&>th]:border-r [&>th]:border-[#e2e2e2] [&>th]:pr-[5px] [&>th]:font-normal">
              <th className="pl-1.5 text-left">Ордер <span className="ml-1 text-[9px] text-gray-500">/</span></th>
              <th>Время</th>
              <th>Тип</th>
              <th>Объем</th>
              <th>Символ</th>
              <th>Цена</th>
              {rest.map((c) => <th key={c}>{c}</th>)}
              <th>Прибыль</th>
            </tr>
          </thead>
          <tbody>
            <tr className="h-5 bg-[#c8c8c8] font-bold">
              <td colSpan={12} className="pl-[7px] whitespace-nowrap">
                <svg viewBox="0 0 8 8" className="mr-[7px] inline size-2" fill="none">
                  <circle cx="4" cy="4" r="3.200" stroke="#808080" />
                  <path d="M2 6l4-4" stroke="#909090" />
                </svg>
                Баланс: 32 426.57 RUR Средства: 32 426.57 Свободная маржа: 32 426.57
              </td>
              <td className="pr-[3px] text-right">0.00</td>
            </tr>
          </tbody>
        </table>
        <div className="h-5" />
        <div className="flex h-1 bg-white">
          <div className="w-[3px] border-t border-r border-black" />
          <div className="w-[70px]" />
          <div className="flex-1 border-t border-l border-black bg-[#f0f0f0]" />
        </div>
      </div>
    </div>
  );
}

export default function App() {
  return (
    <div className="flex h-screen flex-col overflow-hidden bg-[#f0f0f0] font-['Open_Sans','Noto_Sans',sans-serif]">
      <header className="flex h-[23px] shrink-0 items-center bg-white pr-0.5 pl-0.5">
        <svg viewBox="0 0 16 16" className="size-4" fill="none">
          <rect width="16" height="16" fill="#000" />
          <path d="M0 5l3-1 3 1 4-3 3 1 3-2" stroke="#e83010" strokeWidth="1.500" />
          <path d="M0 8l3-1 3 1 4-3 3 1 3-2" stroke="#f07010" strokeWidth="1.500" />
          <path d="M0 11l3-1 3 1 4-3 3 1 3-2" stroke="#e8c818" strokeWidth="1.500" />
          <path d="M0 14l3-1 3 1 4-3 3 1 3-2" stroke="#70d010" strokeWidth="1.500" />
        </svg>
        <h1 className="ml-[5px] flex-1 text-[11px] text-[#8c8c8c]">7938812: Alpari-Demo - Демо Счет - GBPCAD,Daily</h1>
        <div className="flex text-[#8c8c8c]">
          <button aria-label="Свернуть" className="flex w-[45px] justify-center">
            <svg viewBox="0 0 10 10" className="size-[10px]"><path d="M0 5.500h10" stroke="currentColor" /></svg>
          </button>
          <button aria-label="Восстановить" className="flex w-[46px] justify-center">
            <svg viewBox="0 0 10 10" className="size-[10px]" fill="none">
              <path d="M0.500 2.500h7v7h-7zM2.500 2.500v-2h7v7h-2" stroke="currentColor" />
            </svg>
          </button>
          <button aria-label="Закрыть" className="flex w-[46px] justify-center">
            <svg viewBox="0 0 10 10" className="size-[10px]"><path d="M0 0l10 10M10 0L0 10" stroke="currentColor" /></svg>
          </button>
        </div>
      </header>
      <nav className="flex h-[21px] shrink-0 items-center gap-[19px] border-b border-[#a0a0a0] pl-[7px] text-[11px] text-[#9a9a9a]">
        {MENU.map((m) => (
          <button key={m}>{m}</button>
        ))}
      </nav>
      <Toolbar />
      <main className="flex shrink-0 border-t-2 border-[#808080] bg-[#b4b4b4] px-0.5">
        <LeftChart />
        <RightChart />
      </main>
      <div className="mt-[3px] flex h-[21px] shrink-0 items-start border-t border-black">
        <button className="h-[19px] w-[102px] border-l-2 border-[#b0b0b0] pl-1 text-[12px] leading-[18px] text-[#707070]">GBPCAD,Daily</button>
        <button className="-mt-px h-[20px] w-24 border border-t-0 border-black bg-white text-[12px] leading-[18px] text-black">GBPCAD,Daily</button>
        <div className="flex-1" />
        <div className="flex gap-4 pt-[6px] pr-[9px] text-[#909090]">
          <button aria-label="Назад"><svg viewBox="0 0 4 6" className="h-[6px] w-1"><path d="M4 0v6L0 3z" fill="currentColor" /></svg></button>
          <button aria-label="Вперед"><svg viewBox="0 0 4 6" className="h-[6px] w-1"><path d="M0 0v6l4-3z" fill="currentColor" /></svg></button>
        </div>
      </div>
      <Terminal />
    </div>
  );
}
